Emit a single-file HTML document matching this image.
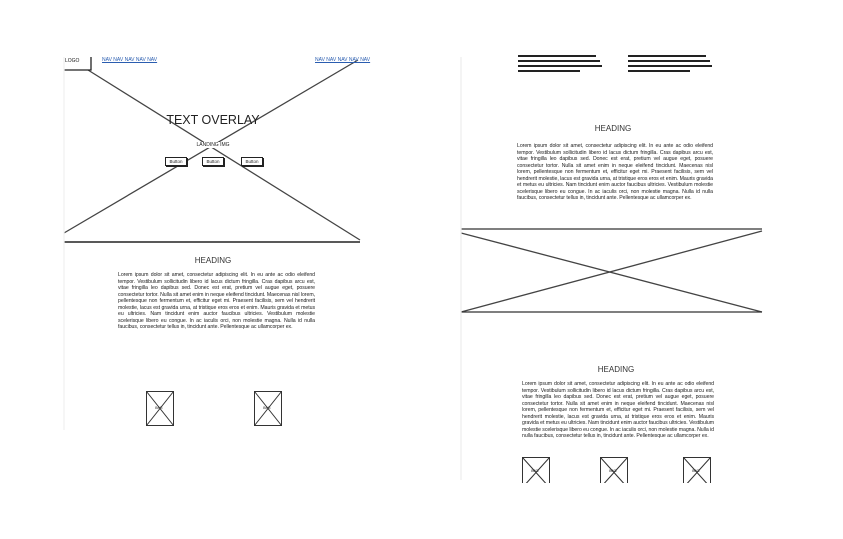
<!DOCTYPE html><html><head><style>
body{margin:0;width:843px;height:539px;background:#fff;position:relative;overflow:hidden;font-family:"Liberation Sans",sans-serif;color:#222}
.a{position:absolute}
.p{position:absolute;font-size:5.2px;line-height:6.5px;text-align:justify;color:#1a1a1a;letter-spacing:-0.05px}
.h{position:absolute;font-size:8px;text-align:center;color:#333}
.b{position:absolute;border:1px solid #222;box-shadow:1px 1px 0 #222;font-size:4.5px;text-align:center;line-height:7px;background:#fff;width:20px;height:7px}
.nav{position:absolute;font-size:5px;color:#2a5db0;text-decoration:underline}
.bl{position:absolute;height:2px;background:#222}
</style></head><body>
<svg class="a" style="left:0;top:0" width="843" height="539">
<g stroke="#444" stroke-width="1.3" fill="none">
<line x1="88" y1="70" x2="360" y2="240"/>
<line x1="64" y1="233" x2="358" y2="60"/>
<line x1="64" y1="242" x2="360" y2="242" stroke-width="1.6" stroke="#222"/>
<polyline points="64,70 91,70 91,57" stroke="#222"/>
<line x1="461" y1="229" x2="762" y2="229" stroke="#333"/>
<line x1="461" y1="233" x2="762" y2="312"/>
<line x1="461" y1="312" x2="762" y2="231"/>
<line x1="461" y1="312" x2="762" y2="312" stroke="#333"/>
<line x1="461" y1="57" x2="461" y2="480" stroke="#eee"/>
<line x1="64" y1="57" x2="64" y2="430" stroke="#f0f0f0"/>
</g>
<g stroke="#333" stroke-width="1" fill="#fff">
<rect x="146.5" y="391.5" width="27" height="34"/><path d="M146.5 391.5L173.5 425.5M173.5 391.5L146.5 425.5"/>
<rect x="254.5" y="391.5" width="27" height="34"/><path d="M254.5 391.5L281.5 425.5M281.5 391.5L254.5 425.5"/>
<rect x="522.5" y="457.5" width="27" height="30"/><path d="M522.5 457.5L549.5 487.5M549.5 457.5L522.5 487.5"/>
<rect x="600.5" y="457.5" width="27" height="30"/><path d="M600.5 457.5L627.5 487.5M627.5 457.5L600.5 487.5"/>
<rect x="683.5" y="457.5" width="27" height="30"/><path d="M683.5 457.5L710.5 487.5M710.5 457.5L683.5 487.5"/>
</g>
<rect x="462" y="483" width="300" height="56" fill="#fff"/>
</svg>
<div class="a" style="left:65px;top:58px;font-size:5px">LOGO</div>
<div class="nav" style="left:102px;top:57px">NAV NAV NAV NAV NAV</div>
<div class="nav" style="left:315px;top:57px">NAV NAV NAV NAV NAV</div>
<div class="a" style="left:150px;top:113px;width:126px;text-align:center;font-size:12.5px;color:#222">TEXT OVERLAY</div>
<div class="a" style="left:193px;top:142px;width:40px;text-align:center;font-size:5px;background:#fff">LANDING IMG</div>
<div class="b" style="left:165px;top:157px">Button</div>
<div class="b" style="left:202px;top:157px">Button</div>
<div class="b" style="left:241px;top:157px">Button</div>
<div class="h" style="left:150px;top:256px;width:126px">HEADING</div>
<div class="p" style="left:118px;top:272px;width:197px">Lorem ipsum dolor sit amet, consectetur adipiscing elit. In eu ante ac odio eleifend tempor. Vestibulum sollicitudin libero id lacus dictum fringilla. Cras dapibus arcu est, vitae fringilla leo dapibus sed. Donec est erat, pretium vel augue eget, posuere consectetur tortor. Nulla sit amet enim in neque eleifend tincidunt. Maecenas nisl lorem, pellentesque non fermentum et, efficitur eget mi. Praesent facilisis, sem vel hendrerit molestie, lacus est gravida urna, at tristique eros eros et enim. Mauris gravida et metus eu ultricies. Nam tincidunt enim auctor faucibus ultricies. Vestibulum molestie scelerisque libero eu congue. In ac iaculis orci, non molestie magna. Nulla id nulla faucibus, consectetur tellus in, tincidunt ante. Pellentesque ac ullamcorper ex.</div>
<div class="a" style="left:155px;top:405px;font-size:4px">IMG</div>
<div class="a" style="left:263px;top:405px;font-size:4px">IMG</div>
<div class="bl" style="left:518px;top:55px;width:78px"></div><div class="bl" style="left:518px;top:60px;width:82px"></div><div class="bl" style="left:518px;top:65px;width:84px"></div><div class="bl" style="left:518px;top:70px;width:62px"></div>
<div class="bl" style="left:628px;top:55px;width:78px"></div><div class="bl" style="left:628px;top:60px;width:82px"></div><div class="bl" style="left:628px;top:65px;width:84px"></div><div class="bl" style="left:628px;top:70px;width:62px"></div>
<div class="h" style="left:550px;top:124px;width:126px">HEADING</div>
<div class="p" style="left:517px;top:143px;width:196px">Lorem ipsum dolor sit amet, consectetur adipiscing elit. In eu ante ac odio eleifend tempor. Vestibulum sollicitudin libero id lacus dictum fringilla. Cras dapibus arcu est, vitae fringilla leo dapibus sed. Donec est erat, pretium vel augue eget, posuere consectetur tortor. Nulla sit amet enim in neque eleifend tincidunt. Maecenas nisl lorem, pellentesque non fermentum et, efficitur eget mi. Praesent facilisis, sem vel hendrerit molestie, lacus est gravida urna, at tristique eros eros et enim. Mauris gravida et metus eu ultricies. Nam tincidunt enim auctor faucibus ultricies. Vestibulum molestie scelerisque libero eu congue. In ac iaculis orci, non molestie magna. Nulla id nulla faucibus, consectetur tellus in, tincidunt ante. Pellentesque ac ullamcorper ex.</div>
<div class="h" style="left:553px;top:365px;width:126px">HEADING</div>
<div class="p" style="left:522px;top:381px;width:192px">Lorem ipsum dolor sit amet, consectetur adipiscing elit. In eu ante ac odio eleifend tempor. Vestibulum sollicitudin libero id lacus dictum fringilla. Cras dapibus arcu est, vitae fringilla leo dapibus sed. Donec est erat, pretium vel augue eget, posuere consectetur tortor. Nulla sit amet enim in neque eleifend tincidunt. Maecenas nisl lorem, pellentesque non fermentum et, efficitur eget mi. Praesent facilisis, sem vel hendrerit molestie, lacus est gravida urna, at tristique eros eros et enim. Mauris gravida et metus eu ultricies. Nam tincidunt enim auctor faucibus ultricies. Vestibulum molestie scelerisque libero eu congue. In ac iaculis orci, non molestie magna. Nulla id nulla faucibus, consectetur tellus in, tincidunt ante. Pellentesque ac ullamcorper ex.</div>
<div class="a" style="left:531px;top:468px;font-size:4px">IMG</div>
<div class="a" style="left:609px;top:468px;font-size:4px">IMG</div>
<div class="a" style="left:692px;top:468px;font-size:4px">IMG</div>
</body></html>
